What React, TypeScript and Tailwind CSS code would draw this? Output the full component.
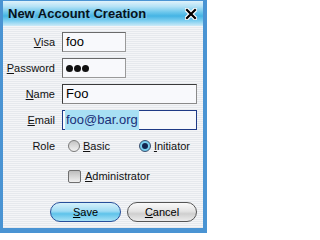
import React from 'react'

const font = { fontFamily: '"Liberation Sans", Arial, sans-serif' }

function Label({ first, rest }: { first: string; rest: string }) {
  return (
    <span className="w-[52px] shrink-0 text-right text-[11px] text-[#111]">
      <span className="underline underline-offset-[1px]">{first}</span>
      {rest}
    </span>
  )
}

function Radio({ checked }: { checked?: boolean }) {
  if (checked) {
    return (
      <span className="flex h-[12px] w-[12px] items-center justify-center rounded-full border border-[#3a4f6e] bg-[radial-gradient(circle,#9fe0f6_0%,#5bbde4_100%)]">
        <span className="h-[6px] w-[6px] rounded-full bg-[#12244f]" />
      </span>
    )
  }
  return (
    <span className="h-[12px] w-[12px] rounded-full border border-[#7a7a7a] bg-[linear-gradient(180deg,#c4c4c4_0%,#f2f2f2_100%)]" />
  )
}

export default function App() {
  return (
    <div
      style={font}
      className="flex h-[233px] w-[207px] flex-col border-t border-l-[3px] border-r-[4px] border-b-[5px] border-[#4a94d3]"
    >
      <div className="flex h-[25px] items-center bg-[linear-gradient(180deg,#dff2fb_0%,#b4e2f6_22%,#6cc7ec_45%,#45b4e4_60%,#7fcff0_80%,#cdebf8_100%)] pl-[5px] pr-[6px]">
        <span className="flex-1 text-[13px] font-bold text-[#07121c] [text-shadow:1px_1px_0_#7fc6e6]">
          New Account Creation
        </span>
        <svg width="12" height="12" viewBox="0 0 12 12">
          <path d="M2 2 L10 10 M10 2 L2 10" stroke="#fff" strokeWidth="4.5" strokeLinecap="square" />
          <path d="M2 2 L10 10 M10 2 L2 10" stroke="#000" strokeWidth="2.2" strokeLinecap="square" />
        </svg>
      </div>
      <div className="flex flex-1 flex-col bg-[repeating-linear-gradient(180deg,#f4f5f7_0px,#f4f5f7_1px,#e6e9ed_1px,#e6e9ed_2px)] pt-[6px]">
        <div className="flex h-[20px] items-center">
          <Label first="V" rest="isa" />
          <div className="ml-[7px] flex h-[20px] w-[64px] items-center border border-[#6a6a6a] border-r-[#9a9a9a] border-b-[#9a9a9a] bg-[#f8f9fc] pl-[3px] text-[13px] text-[#000]">
            foo
          </div>
        </div>
        <div className="mt-[6px] flex h-[20px] items-center">
          <Label first="P" rest="assword" />
          <div className="ml-[7px] flex h-[20px] w-[64px] items-center gap-[1px] border border-[#6a6a6a] border-r-[#9a9a9a] border-b-[#9a9a9a] bg-[#f8f9fc] pl-[3px]">
            <span className="h-[7px] w-[7px] rounded-full bg-[#111]" />
            <span className="h-[7px] w-[7px] rounded-full bg-[#111]" />
            <span className="h-[7px] w-[7px] rounded-full bg-[#111]" />
          </div>
        </div>
        <div className="mt-[6px] flex h-[20px] items-center">
          <Label first="N" rest="ame" />
          <div className="ml-[7px] flex h-[20px] w-[135px] items-center border border-[#3a3a3a] border-r-[#8a8a8a] border-b-[#8a8a8a] bg-[#f8f9fc] pl-[3px] text-[13px] text-[#000]">
            Foo
          </div>
        </div>
        <div className="mt-[6px] flex h-[20px] items-center">
          <Label first="E" rest="mail" />
          <div className="ml-[7px] flex h-[20px] w-[135px] items-center border border-[#1f3a86] bg-[#f8f9fc] pl-[2px] text-[13px]">
            <span className="bg-[#a8e0f4] px-[1px] text-[#1a2f78]">foo@bar.org</span>
          </div>
        </div>
        <div className="mt-[6px] flex h-[20px] items-center">
          <span className="w-[52px] shrink-0 text-right text-[11px] text-[#111]">Role</span>
          <div className="ml-[13px] flex items-center gap-[3px] text-[11px] text-[#111]">
            <Radio />
            <span>
              <span className="underline underline-offset-[1px]">B</span>asic
            </span>
          </div>
          <div className="ml-[29px] flex items-center gap-[3px] text-[11px] text-[#111]">
            <Radio checked />
            <span>
              <span className="underline underline-offset-[1px]">I</span>nitiator
            </span>
          </div>
        </div>
        <div className="mt-[10px] flex h-[20px] items-center pl-[65px]">
          <span className="h-[13px] w-[13px] rounded-[2px] border border-[#6f6f6f] bg-[linear-gradient(180deg,#bdbdbd_0%,#efefef_100%)]" />
          <span className="ml-[4px] text-[11px] text-[#111]">
            <span className="underline underline-offset-[1px]">A</span>dministrator
          </span>
        </div>
        <div className="mt-[16px] flex h-[20px] justify-end gap-[6px] pr-[6px]">
          <button className="flex h-[20px] w-[71px] items-center justify-center rounded-full border border-[#274f9a] bg-[linear-gradient(180deg,#d6f1fb_0%,#9fdcf4_45%,#5ec3ea_60%,#a8e2f6_100%)] text-[11px] text-[#000]">
            <span className="underline underline-offset-[1px]">S</span>ave
          </button>
          <button className="flex h-[20px] w-[70px] items-center justify-center rounded-full border border-[#555] bg-[linear-gradient(180deg,#fafafa_0%,#e4e4e4_45%,#cfcfcf_60%,#ececec_100%)] text-[11px] text-[#000]">
            <span className="underline underline-offset-[1px]">C</span>ancel
          </button>
        </div>
      </div>
    </div>
  )
}
